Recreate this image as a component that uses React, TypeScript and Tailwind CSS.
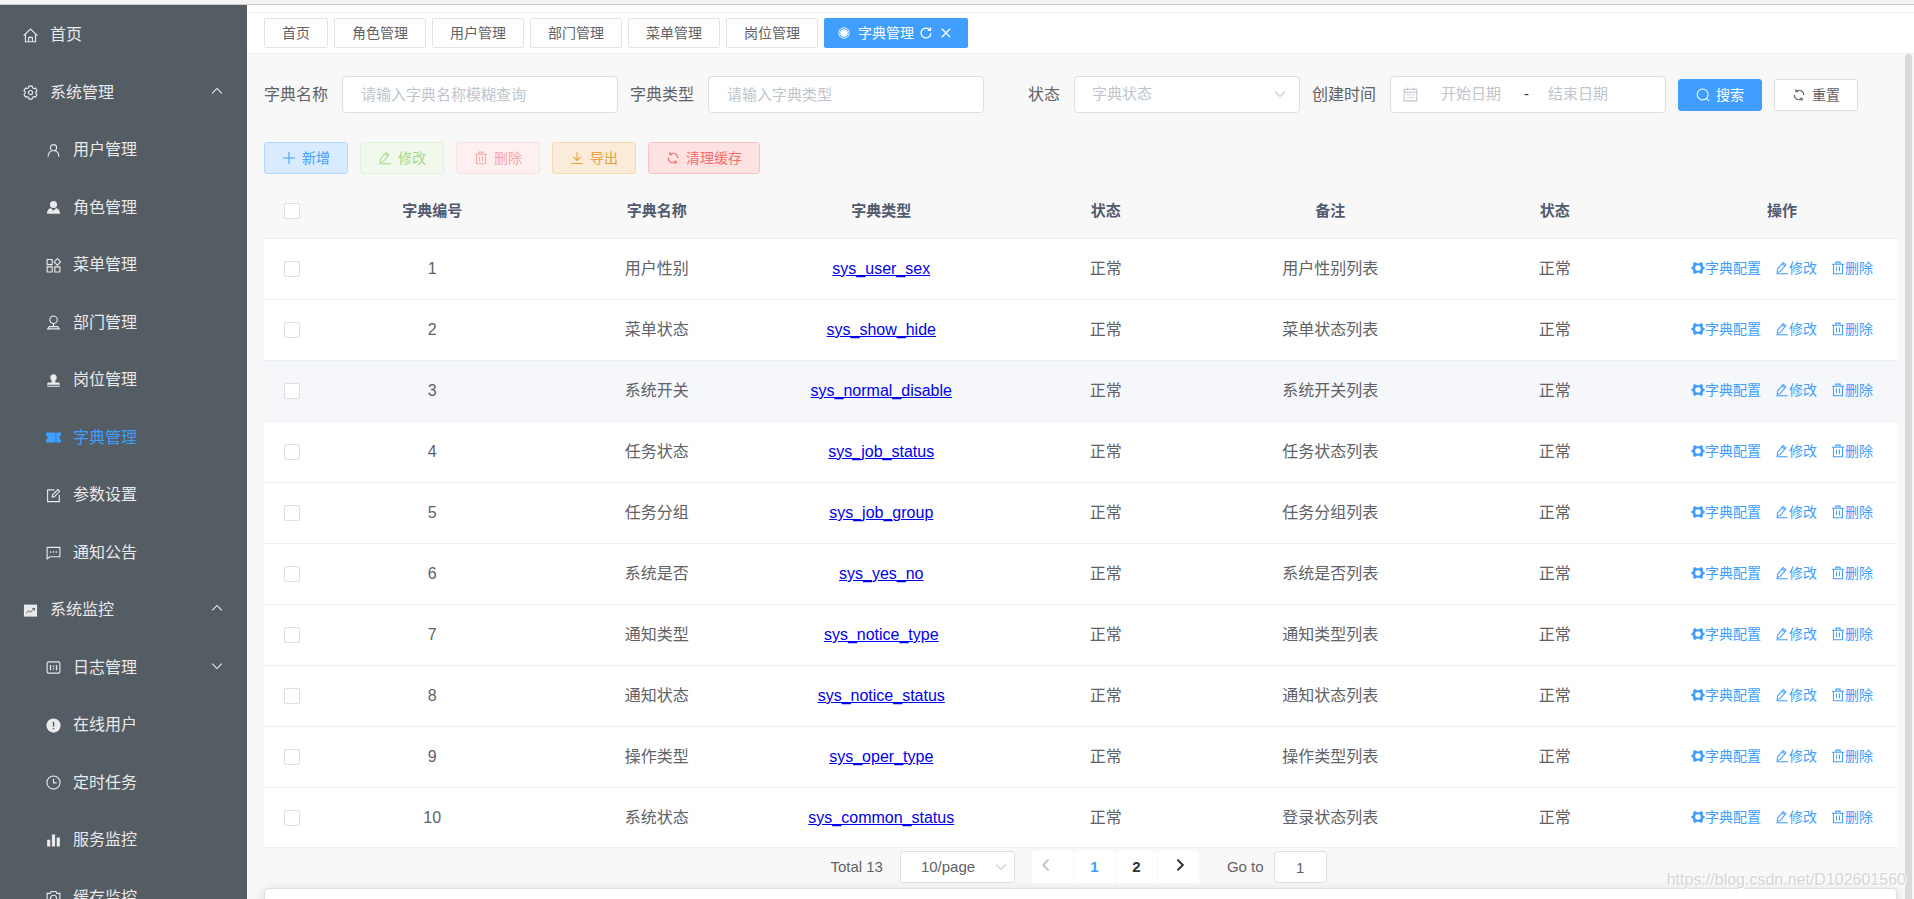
import type { ReactNode } from 'react'
import clsx from 'clsx'

const icons: Record<string, ReactNode> = {
  home: (
    <>
      <path d="M.6 8.200 8 1.200l7.400 7M2.600 6.600v8h10.800v-8" />
      <path d="M6 14.600V10h4v4.600" />
    </>
  ),
  setting: (
    <>
      <path d="M6.400 1.200h3.200l.7 1.900 1 .6 2-.4 1.600 2.800-1.300 1.500v1l1.300 1.500-1.600 2.800-2-.4-1 .6-.7 1.900H6.400l-.7-1.900-1-.6-2 .4-1.600-2.800 1.300-1.500v-1L1.100 6.100l1.600-2.800 2 .4 1-.6z" />
      <circle cx="8" cy="8" r="2.200" />
    </>
  ),
  user: (
    <>
      <circle cx="8" cy="5" r="3.300" />
      <path d="M2.200 14.500c.2-3.200 1.700-5.400 4-6.200M13.800 14.500c-.2-3.200-1.700-5.400-4-6.200" />
    </>
  ),
  userSolid: (
    <g fill="currentColor" stroke="none">
      <circle cx="8" cy="4.800" r="3.800" />
      <path d="M1 14.600c.2-3.200 1.800-5.500 4.200-6L8 11.400l2.800-2.800c2.400.5 4 2.800 4.200 6z" />
    </g>
  ),
  menu: (
    <path d="M1.200 1.600h5.400V7H1.200zM1.200 9.500h5.400v5.400H1.200zM9.400 9.500h5.400v5.400H9.400zM12.100.7l3.500 3.500-3.500 3.500-3.500-3.500z" />
  ),
  coordinate: (
    <>
      <circle cx="8" cy="5" r="4" />
      <path d="M8 9v3.400M3.600 12.400h8.800l1.800 2.400H1.800z" />
    </>
  ),
  stamp: (
    <g fill="currentColor" stroke="none">
      <path d="M8 1.400a3.400 3.400 0 0 1 2 6.200v2.600h3.200a1.600 1.600 0 0 1 1.600 1.600v.6H1.200v-.6a1.600 1.600 0 0 1 1.600-1.600H6V7.600a3.400 3.400 0 0 1 2-6.200z" />
      <path d="M1.200 13.600h13.600v1.100H1.200z" />
    </g>
  ),
  ticket: (
    <g fill="currentColor" stroke="none">
      <path d="M0 2.600h10v1.600h1V2.600h5v3a2.500 2.500 0 0 0 0 4.800v3h-5v-1.600h-1v1.600H0v-3a2.500 2.500 0 0 0 0-4.800z" />
      <path d="M10 5.600h1v1.600h-1zM10 8.800h1v1.600h-1z" fill="#545c64" />
    </g>
  ),
  edit: (
    <>
      <path d="M9 2H1.700v12.500h12.500V7.500" />
      <path d="M6.600 9.600 7 7.200 12.600 1.600l1.900 1.900L9 9.200z" />
    </>
  ),
  message: (
    <>
      <path d="M1.200 2.500h13.600v10H4.200l-3 2.300z" />
      <path d="M4.300 7.500h1.400M7.300 7.500h1.400M10.300 7.500h1.400" strokeWidth="1.600" />
    </>
  ),
  trend: (
    <>
      <path d="M1 1.700h14v12.800H1z" fill="currentColor" stroke="none" />
      <path d="m3.500 10.600 2.600-2.400 2 1.600 4-4M9.800 5.800h2.500V8" stroke="#545c64" strokeWidth="1" />
    </>
  ),
  log: (
    <>
      <rect x="1.200" y="2" width="13.600" height="12" rx="1.400" />
      <path d="M4.800 5.200v5.600M11.200 5.200v5.600M8 6v1.400M8 8.800v1.400" strokeWidth="1.400" />
    </>
  ),
  warning: (
    <>
      <circle cx="8" cy="8" r="7.600" fill="currentColor" stroke="none" />
      <path d="M8 4v5M8 10.600v1.500" stroke="#545c64" strokeWidth="1.500" />
    </>
  ),
  clock: (
    <>
      <circle cx="8" cy="8" r="7" />
      <path d="M8 4v4.400h3.400" />
    </>
  ),
  chart: (
    <path
      d="M1.200 7.200h3.400v7.300H1.200zM6.300 1.600h3.400v12.900H6.300zM11.400 4.800h3.400v9.700h-3.400z"
      fill="currentColor"
      stroke="none"
    />
  ),
  camera: (
    <>
      <path d="M1.200 3.600h3.300l1-2h5l1 2h3.300v11H1.200z" />
      <circle cx="8" cy="8.800" r="3.200" />
    </>
  ),
  up: <path d="m1.600 11.200 6.400-6.600 6.400 6.600" strokeWidth="1.500" />,
  down: <path d="m1.600 4.800 6.400 6.600 6.400-6.600" strokeWidth="1.500" />,
  left: <path d="M10.600 2.600 5.200 8l5.400 5.400" />,
  right: <path d="M5.400 2.600 10.800 8l-5.400 5.400" />,
  plus: <path d="M8 1.200v13.600M1.200 8h13.600" />,
  pen: (
    <>
      <path d="m2.600 13.200.2-3.800 6.400-7.700 3.200 2.600-6.300 7.600zM8 3.300l3.100 2.500" />
      <path d="M1.600 14.600h13" />
    </>
  ),
  trash: (
    <>
      <path d="M1 3.600h14M5.600 3.400V1.300h4.800v2.100M2.800 3.800v10.800h10.400V3.800" />
      <path d="M6.300 6.400v5.400M9.700 6.400v5.400" />
    </>
  ),
  download: <path d="M8 1.200v9.400M3.800 6.600 8 10.800l4.200-4.200M1.400 14.200h13.200" />,
  refresh: (
    <>
      <path d="M4.700 3.700A5.400 5.400 0 0 1 13.400 8.300M11.300 12.300A5.400 5.400 0 0 1 2.600 7.700" />
      <path d="M4.400 1.500v2.700h2.700M11.600 14.500v-2.700H8.900" />
    </>
  ),
  reload: (
    <>
      <path d="M13.400 4.200A6.600 6.600 0 1 0 14.600 8" strokeWidth="1.600" />
      <path d="M14 .8v3.800h-3.800" strokeWidth="1.600" />
    </>
  ),
  close: <path d="m2.400 2.400 11.200 11.200M13.600 2.400 2.400 13.600" strokeWidth="1.700" />,
  dot: (
    <>
      <circle cx="8" cy="8" r="7" />
      <circle cx="8" cy="8" r="5" fill="currentColor" stroke="none" />
    </>
  ),
  search: (
    <>
      <circle cx="7.600" cy="7.400" r="6.200" />
      <path d="m12 12 3 3" />
    </>
  ),
  calendar: (
    <>
      <path d="M1.200 2.400h13.600v12.400H1.200zM1.200 5.600h13.600M4.600.6v3.200M11.400.6v3.200" />
      <path d="M4 8.300h8M4 11.500h8" strokeDasharray="2 1" />
    </>
  ),
  gear: (
    <path
      fill="currentColor"
      stroke="none"
      fillRule="evenodd"
      d="M4.400 1.200 6.600 2.600h2.800l2.200-1.400 1.900 1.500v2.400l.6 1.400 1.500.3v2.400l-1.500.3-.6 1.400v2.400l-1.900 1.500-2.200-1.400H6.600l-2.200 1.400-1.900-1.500v-2.400l-.6-1.400-1.500-.3V6.800l1.500-.3.6-1.400V2.700zM8 4.800a3.200 3.200 0 1 0 0 6.400 3.200 3.200 0 0 0 0-6.400z"
    />
  ),
}

function Icon({ name, className }: { name: string; className?: string }) {
  return (
    <svg
      viewBox="0 0 16 16"
      fill="none"
      stroke="currentColor"
      strokeWidth="1.2"
      aria-hidden="true"
      className={clsx('shrink-0', className)}
    >
      {icons[name]}
    </svg>
  )
}

const menu = [
  { label: '首页', icon: 'home' },
  { label: '系统管理', icon: 'setting', arrow: 'up' },
  { label: '用户管理', icon: 'user', child: true },
  { label: '角色管理', icon: 'userSolid', child: true },
  { label: '菜单管理', icon: 'menu', child: true },
  { label: '部门管理', icon: 'coordinate', child: true },
  { label: '岗位管理', icon: 'stamp', child: true },
  { label: '字典管理', icon: 'ticket', child: true, active: true },
  { label: '参数设置', icon: 'edit', child: true },
  { label: '通知公告', icon: 'message', child: true },
  { label: '系统监控', icon: 'trend', arrow: 'up' },
  { label: '日志管理', icon: 'log', child: true, arrow: 'down' },
  { label: '在线用户', icon: 'warning', child: true },
  { label: '定时任务', icon: 'clock', child: true },
  { label: '服务监控', icon: 'chart', child: true },
  { label: '缓存监控', icon: 'camera', child: true },
]

const tabs = ['首页', '角色管理', '用户管理', '部门管理', '菜单管理', '岗位管理']

const actions = [
  { label: '新增', icon: 'plus', style: 'border-[#b3d8ff] bg-[#d9ebff] text-[#409eff]' },
  { label: '修改', icon: 'pen', style: 'border-[#e1f3d8] bg-[#f0f9eb] text-[#a4da89]' },
  { label: '删除', icon: 'trash', style: 'border-[#fde2e2] bg-[#fef0f0] text-[#f9a7a7]' },
  { label: '导出', icon: 'download', style: 'border-[#f5dab1] bg-[#faecd8] text-[#e6a23c]' },
  { label: '清理缓存', icon: 'refresh', style: 'border-[#fbc4c4] bg-[#fde2e2] text-[#f56c6c]' },
]

const columns = ['字典编号', '字典名称', '字典类型', '状态', '备注', '状态']

const rows = [
  { id: 1, name: '用户性别', type: 'sys_user_sex', remark: '用户性别列表' },
  { id: 2, name: '菜单状态', type: 'sys_show_hide', remark: '菜单状态列表' },
  { id: 3, name: '系统开关', type: 'sys_normal_disable', remark: '系统开关列表' },
  { id: 4, name: '任务状态', type: 'sys_job_status', remark: '任务状态列表' },
  { id: 5, name: '任务分组', type: 'sys_job_group', remark: '任务分组列表' },
  { id: 6, name: '系统是否', type: 'sys_yes_no', remark: '系统是否列表' },
  { id: 7, name: '通知类型', type: 'sys_notice_type', remark: '通知类型列表' },
  { id: 8, name: '通知状态', type: 'sys_notice_status', remark: '通知状态列表' },
  { id: 9, name: '操作类型', type: 'sys_oper_type', remark: '操作类型列表' },
  { id: 10, name: '系统状态', type: 'sys_common_status', remark: '登录状态列表' },
]

const field =
  'h-[37px] rounded border border-[#dcdfe6] bg-white text-[15px] placeholder:text-[#c0c4cc] focus:outline-none'
const label = 'w-[78px] shrink-0 text-base'
const button = 'flex h-8 shrink-0 items-center gap-1.5 rounded-[3px] border px-[17px] text-sm'

function Sidebar() {
  return (
    <nav className="w-[247px] shrink-0 overflow-hidden bg-[#545c64] pt-px text-[#eaeaea]">
      <ul>
        {menu.map((item) => (
          <li key={item.label} className="odd:h-[58px] even:h-[57px]">
            <a
              href="#"
              className={clsx(
                'flex h-full items-center pr-6 text-base',
                item.child ? 'pl-[46px]' : 'pl-[23px]',
                item.active && 'text-[#409eff]',
              )}
            >
              <Icon name={item.icon} className="mr-3 size-[15px]" />
              {item.label}
              {item.arrow && <Icon name={item.arrow} className="mb-1 ml-auto size-3" />}
            </a>
          </li>
        ))}
      </ul>
    </nav>
  )
}

function Tabs() {
  return (
    <header className="shrink-0 bg-white">
      <div className="h-2 border-b border-[#f0f0f0]" />
      <div className="flex gap-1.5 border-b border-[#eeeeee] px-[17px] py-[5px] text-sm">
        {tabs.map((tab) => (
          <button key={tab} className="h-[30px] rounded-xs border border-[#e2e3e6] px-[17px]">
            {tab}
          </button>
        ))}
        <div className="flex h-[30px] items-center rounded-xs bg-[#409eff] pr-4 pl-3.5 text-white">
          <Icon name="dot" className="mr-2 size-3" />
          <span className="mr-1.5">字典管理</span>
          <button aria-label="刷新" className="mr-2">
            <Icon name="reload" className="size-3" />
          </button>
          <button aria-label="关闭">
            <Icon name="close" className="size-3" />
          </button>
        </div>
      </div>
    </header>
  )
}

function SearchForm() {
  return (
    <form className="flex items-center gap-3">
      <div className="flex items-center">
        <label htmlFor="dictName" className={label}>
          字典名称
        </label>
        <input id="dictName" className={clsx(field, 'w-[276px] px-[18px]')} placeholder="请输入字典名称模糊查询" />
      </div>
      <div className="flex items-center">
        <label htmlFor="dictType" className={label}>
          字典类型
        </label>
        <input id="dictType" className={clsx(field, 'w-[276px] px-[18px]')} placeholder="请输入字典类型" />
      </div>
      <div className="flex items-center">
        <label htmlFor="status" className={clsx(label, 'pr-3.5 text-right')}>
          状态
        </label>
        <div className="relative">
          <select id="status" className={clsx(field, 'w-[226px] appearance-none px-[17px] text-[#c0c4cc]')}>
            <option>字典状态</option>
          </select>
          <Icon name="down" className="pointer-events-none absolute top-3 right-3.5 size-3 text-[#c0c4cc]" />
        </div>
      </div>
      <div className="flex items-center">
        <label htmlFor="startDate" className={label}>
          创建时间
        </label>
        <div className={clsx(field, 'flex w-[276px] items-center pl-3')}>
          <Icon name="calendar" className="mr-1 size-[15px] text-[#c0c4cc]" />
          <input
            id="startDate"
            className="w-[98px] text-center placeholder:text-[#c0c4cc] focus:outline-none"
            placeholder="开始日期"
          />
          <span className="w-[13px] text-center text-[#303133]">-</span>
          <input
            aria-label="结束日期"
            className="w-[90px] text-center placeholder:text-[#c0c4cc] focus:outline-none"
            placeholder="结束日期"
          />
        </div>
      </div>
      <button type="button" className={clsx(button, 'border-[#409eff] bg-[#409eff] text-white')}>
        <Icon name="search" className="size-3.5" />
        搜索
      </button>
      <button type="button" className={clsx(button, 'border-[#dcdfe6] bg-white')}>
        <Icon name="refresh" className="size-3.5" />
        重置
      </button>
    </form>
  )
}

function Checkbox({ name }: { name: string }) {
  return (
    <input
      type="checkbox"
      aria-label={name}
      className="mx-auto block size-4 appearance-none rounded-xs border border-[#dcdfe6] bg-white checked:bg-[#409eff]"
    />
  )
}

function DictTable() {
  return (
    <table className="mt-2.5 w-full table-fixed border-separate border-spacing-0 text-center">
      <thead className="text-[15px] text-[#515a6e]">
        <tr className="h-[55px]">
          <th className="w-14 border-b border-[#ebeef5]">
            <Checkbox name="全选" />
          </th>
          {columns.map((column, i) => (
            <th key={i} className="border-b border-[#ebeef5]">
              {column}
            </th>
          ))}
          <th className="w-[230px] border-b border-[#ebeef5]">操作</th>
        </tr>
      </thead>
      <tbody className="text-base">
        {rows.map((row) => (
          <tr
            key={row.id}
            className={clsx(
              'h-[61px] last:h-[60px] *:border-b *:border-[#ebeef5]',
              row.id === 3 ? 'bg-[#f5f7fa]' : 'bg-white',
            )}
          >
            <td>
              <Checkbox name={row.name} />
            </td>
            <td>{row.id}</td>
            <td>{row.name}</td>
            <td>
              <a href="#" className="text-[#0000ee] underline">
                {row.type}
              </a>
            </td>
            <td>正常</td>
            <td>{row.remark}</td>
            <td>正常</td>
            <td>
              <div className="flex justify-center gap-3.5 pb-0.5 text-sm text-[#409eff]">
                <button className="flex items-center">
                  <Icon name="gear" className="size-3.5" />
                  字典配置
                </button>
                <button className="flex items-center">
                  <Icon name="pen" className="size-3.5" />
                  修改
                </button>
                <button className="flex items-center">
                  <Icon name="trash" className="size-3.5" />
                  删除
                </button>
              </div>
            </td>
          </tr>
        ))}
      </tbody>
    </table>
  )
}

function Pagination() {
  return (
    <div className="flex items-center justify-center pt-[3px] pr-1 pb-[5px] text-[15px]">
      <span className="mr-[17px]">Total 13</span>
      <div className="relative mr-[17px]">
        <select
          aria-label="每页条数"
          className="h-8 w-[115px] appearance-none rounded-[3px] border border-[#dcdfe6] bg-white px-5 focus:outline-none"
        >
          <option>10/page</option>
        </select>
        <Icon name="down" className="pointer-events-none absolute top-2.5 right-2 size-3 text-[#c0c4cc]" />
      </div>
      <div className="mr-7 flex gap-px font-bold text-[#303133]">
        <button aria-label="上一页" className="h-8 w-[41px] rounded-xs bg-white pb-1 pl-1.5 text-[#c0c4cc]">
          <Icon name="left" className="size-4 stroke-2" />
        </button>
        <button className="h-8 w-[41px] rounded-xs bg-white text-[#409eff]">1</button>
        <button className="h-8 w-[41px] rounded-xs bg-white">2</button>
        <button aria-label="下一页" className="h-8 w-[41px] rounded-xs bg-white pb-1 pl-3.5">
          <Icon name="right" className="size-4 stroke-2" />
        </button>
      </div>
      <label htmlFor="page" className="mr-2.5">
        Go to
      </label>
      <input
        id="page"
        defaultValue="1"
        className="h-8 w-[53px] rounded border border-[#dcdfe6] bg-white text-center focus:outline-none"
      />
    </div>
  )
}

export default function App() {
  return (
    <div className="relative flex h-screen flex-col overflow-hidden bg-[#f8f8f8] font-['Liberation_Sans','Noto_Sans_CJK_SC',sans-serif] text-[#606266]">
      <div className="h-[5px] shrink-0 border-b border-[#cccccc] bg-[#f5f5f5]" />
      <div className="flex min-h-0 flex-1">
        <Sidebar />
        <div className="flex min-w-0 flex-1 flex-col">
          <Tabs />
          <main className="relative min-h-0 flex-1 overflow-hidden px-[17px] pt-[22px]">
            <SearchForm />
            <div className="mt-[29px] flex gap-3">
              {actions.map((action) => (
                <button key={action.label} className={clsx(button, action.style)}>
                  <Icon name={action.icon} className="size-3.5" />
                  {action.label}
                </button>
              ))}
            </div>
            <DictTable />
            <Pagination />
            <div className="h-40 rounded border border-[#dcdfe6] bg-white shadow-[0_2px_12px_rgba(0,0,0,0.12)]" />
            <div className="absolute inset-y-0 right-0.5 w-[7px] rounded-t bg-[#dadada]" />
          </main>
        </div>
      </div>
      <div className="absolute right-2 bottom-[7px] text-base text-[#d6d6d6] [text-shadow:1px_1px_0_#ffffff]">
        https://blog.csdn.net/D102601560
      </div>
    </div>
  )
}
